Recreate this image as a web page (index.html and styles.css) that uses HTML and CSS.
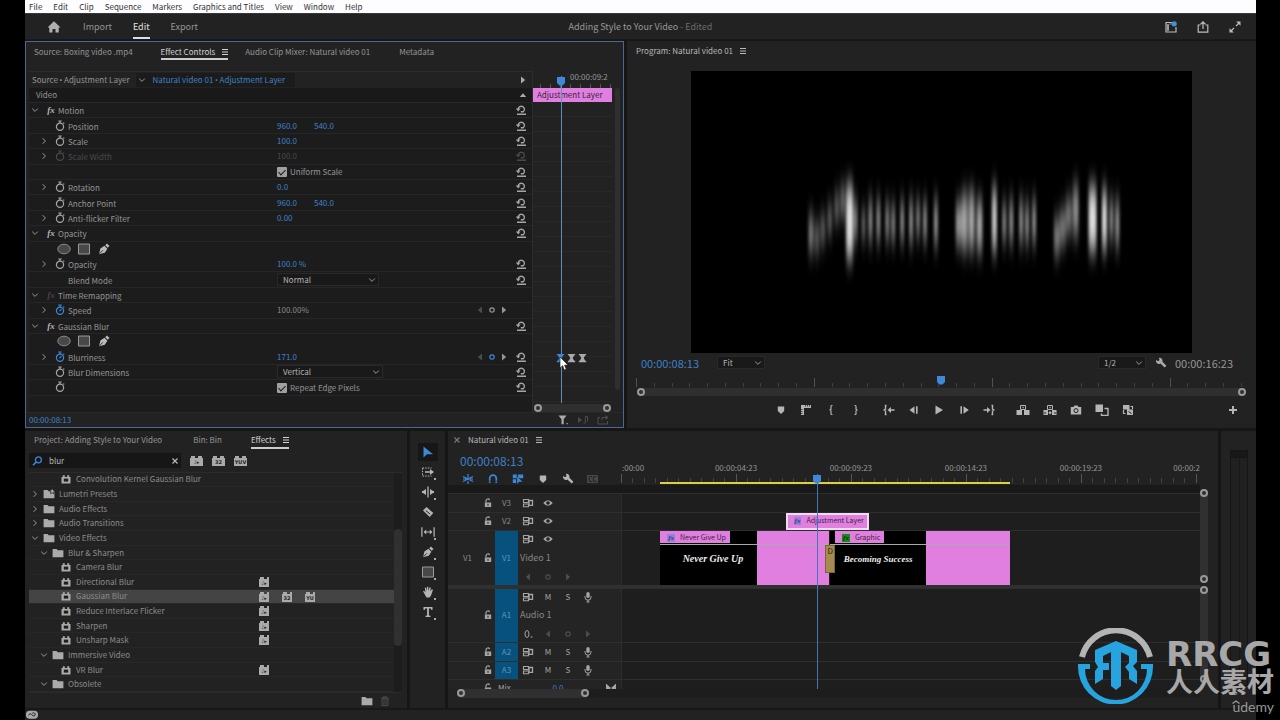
FILE: index.html
```html
<!DOCTYPE html>
<html lang="en">
<head>
<meta charset="utf-8">
<title>Adding Style to Your Video - Edited</title>
<link rel="stylesheet" href="styles.css">
</head>
<body>
<svg class="defs" aria-hidden="true">
  <symbol id="watch" viewBox="0 0 12 12"><path d="M4.3 1h3.4M6 1v2M9.3 2.6l.9.9" fill="none" stroke="currentColor" stroke-width="1.2"/><circle cx="6" cy="6.8" r="3.6" fill="none" stroke="currentColor" stroke-width="1.2"/></symbol>
  <symbol id="watch-on" viewBox="0 0 12 12"><path d="M4.3 1h3.4M6 1v2M9.3 2.6l.9.9M5.5 7.2l2-2" fill="none" stroke="currentColor" stroke-width="1.2"/><circle cx="6" cy="6.8" r="3.6" fill="none" stroke="currentColor" stroke-width="1.2"/></symbol>
  <symbol id="reset" viewBox="0 0 12 12"><path d="M3.2 5.2a3.1 3.1 0 1 1 5 2.600H5.8M2 10.300h9" fill="none" stroke="currentColor" stroke-width="1.400"/><path d="M.8 4.400h4.800L3.200 7.400z" fill="currentColor"/></symbol>
  <symbol id="chev-r" viewBox="0 0 12 12"><path d="M4.6 3.2L7.4 6 4.6 8.800" fill="none" stroke="currentColor"/></symbol>
  <symbol id="chev-d" viewBox="0 0 12 12"><path d="M3.200 4.600L6 7.400 8.800 4.600" fill="none" stroke="currentColor"/></symbol>
  <symbol id="tri-l" viewBox="0 0 12 12"><path d="M8 2.500v7L3.800 6z" fill="currentColor"/></symbol>
  <symbol id="tri-r" viewBox="0 0 12 12"><path d="M4 2.500v7L8.200 6z" fill="currentColor"/></symbol>
  <symbol id="tri-u" viewBox="0 0 12 12"><path d="M2.800 8h6.400L6 4.200z" fill="currentColor"/></symbol>
  <symbol id="key" viewBox="0 0 12 12"><circle cx="6" cy="6" r="2.200" fill="none" stroke="currentColor" stroke-width="1.200"/></symbol>
  <symbol id="ellipse" viewBox="0 0 14 12"><ellipse cx="7" cy="6" rx="6.200" ry="4.800" fill="#484848" stroke="#8a8a8a"/></symbol>
  <symbol id="rect" viewBox="0 0 14 12"><path d="M1.500 1h11v10h-11z" fill="#484848" stroke="#999"/></symbol>
  <symbol id="pen" viewBox="0 0 12 12"><path d="M1 11.200l1.400-5.800 4-2.600 3 3-2.600 4z" fill="currentColor"/><path d="M7.200 2.200L9 .500l2.500 2.500L9.800 4.800z" fill="currentColor"/><path d="M1.300 10.900l3.700-3.700" stroke="#1c1c1c" stroke-width=".8"/></symbol>
  <symbol id="home" viewBox="0 0 14 12"><path d="M7 .3L.5 6.400h1.800v5.200h3.200V8h3v3.600h3.200V6.400h1.800z" fill="currentColor"/></symbol>
  <symbol id="menu" viewBox="0 0 12 12"><path d="M3 3.500h6M3 6h6M3 8.500h6" stroke="currentColor"/></symbol>
  <symbol id="layout" viewBox="0 0 12 12"><path d="M7 1.500H1v9.500h10V6" fill="none" stroke="currentColor" stroke-width="1.200"/><path d="M2.500 3.500h1v6h-1zM4 3h3" fill="currentColor" stroke="currentColor" stroke-width=".6"/><circle cx="9.200" cy="2.800" r="2.600" fill="#4090dd"/></symbol>
  <symbol id="share" viewBox="0 0 12 12"><path d="M3.500 4H1.200v7.200h9.600V4H8.500M6 8V1M3.600 3.200L6 .900l2.400 2.300" fill="none" stroke="currentColor" stroke-width="1.200"/></symbol>
  <symbol id="expand" viewBox="0 0 12 12"><path d="M7 5l3.500-3.500M5 7l-3.500 3.500" stroke="currentColor" stroke-width="1.200"/><path d="M7.200.500h4.300v4.300zM.5 7.200v4.300h4.300z" fill="currentColor"/></symbol>
  <symbol id="wrench" viewBox="0 0 12 12"><path d="M3.800 1A2.900 2.900 0 0 1 7.400 4.700l4 4-1.700 1.900-4.300-4.200A2.900 2.900 0 0 1 1.100 3l2 1.300 1.500-1.200z" fill="currentColor"/></symbol>
  <symbol id="marker" viewBox="0 0 12 12"><path d="M2.800 2.500h6.400v4.400L6 9.900 2.800 6.900z" fill="currentColor"/></symbol>
  <symbol id="head" viewBox="0 0 10 12"><path d="M1 1h8v6L6.500 9.500h-3L1 7z" fill="#3f87d8"/></symbol>
  <symbol id="rulers" viewBox="0 0 12 12"><path d="M1 1h10v3H4v7H1z" fill="currentColor"/><path d="M5.500 1v1.500M7.500 1v1.500M9.500 1v1.500M1 5.500h1.500M1 7.500h1.500M1 9.500h1.500" stroke="#222" stroke-width=".8"/></symbol>
  <symbol id="in" viewBox="0 0 12 12"><path d="M7.500 1.500h-1Q6 1.500 6 2.500v2.700L5 6l1 .8v2.700q0 1 .5 1h1" fill="none" stroke="currentColor" stroke-width="1.200"/></symbol>
  <symbol id="out" viewBox="0 0 12 12"><path d="M4.500 1.500h1Q6 1.500 6 2.500v2.700L7 6l-1 .8v2.700q0 1-.5 1h-1" fill="none" stroke="currentColor" stroke-width="1.200"/></symbol>
  <symbol id="goin" viewBox="0 0 12 12"><path d="M3.500 1.500h-1v3.700L1.200 6l1.300.8v3.700h1M6 6h5.500" fill="none" stroke="currentColor" stroke-width="1.400"/><path d="M4.500 6L8 3v6z" fill="currentColor"/></symbol>
  <symbol id="goout" viewBox="0 0 12 12"><path d="M8.500 1.500h1v3.700l1.300.8-1.300.8v3.700h-1M.5 6H6" fill="none" stroke="currentColor" stroke-width="1.400"/><path d="M7.500 6L4 3v6z" fill="currentColor"/></symbol>
  <symbol id="back" viewBox="0 0 12 12"><path d="M6.500 2.300v7.400L1.500 6zM8 2.300h1.600v7.400H8z" fill="currentColor"/></symbol>
  <symbol id="fwd" viewBox="0 0 12 12"><path d="M5.500 2.300v7.400L10.800 6zM2.400 2.300H4v7.400H2.400z" fill="currentColor"/></symbol>
  <symbol id="play" viewBox="0 0 12 12"><path d="M2.500 1.500v9L10 6z" fill="currentColor"/></symbol>
  <symbol id="lift" viewBox="0 0 14 12"><path d="M4.500 1.500h5v4h-5z" fill="none" stroke="currentColor"/><path d="M6.500 2.800h1.200v1.500H6.500zM.5 6H6V11H.5zM8 6h5.500V11H8z" fill="currentColor"/></symbol>
  <symbol id="extract" viewBox="0 0 14 12"><path d="M4.500 1.500h5v4h-5z" fill="none" stroke="currentColor"/><path d="M6.500 2.800h1.200v1.500H6.500zM.5 6H5V11H.5zM9 6h4.500V11H9z" fill="currentColor"/><path d="M5.300 8.700L7 7v3.500zM8.700 8.700L7 7v3.500z" fill="currentColor"/><path d="M2 8v2M12 8v2" stroke="#222"/></symbol>
  <symbol id="camera" viewBox="0 0 12 12"><path d="M.8 3h2.700l1-1.500h3l1 1.500h2.700v7.500H.8z" fill="currentColor"/><circle cx="6" cy="6.600" r="2" fill="none" stroke="#222"/></symbol>
  <symbol id="compare" viewBox="0 0 14 12"><path d="M.5.500h7.500v7.500H.5z" fill="currentColor"/><path d="M9.500 4.500H13v7H6.500V9.500" fill="none" stroke="currentColor" stroke-width="1.400"/></symbol>
  <symbol id="proxy" viewBox="0 0 12 12"><path d="M1 1h6.500v4.500H1zM5 5.500h6V11H5z" fill="currentColor"/><path d="M8.500 2.500h2v2.500M3.500 9.500h-2V6" fill="none" stroke="currentColor" stroke-width="1.200"/><path d="M6.500 7.500l3 2" stroke="#222"/></symbol>
  <symbol id="plus" viewBox="0 0 12 12"><path d="M6 2v8M2 6h8" stroke="currentColor" stroke-width="2"/></symbol>
  <symbol id="search" viewBox="0 0 12 12"><circle cx="7.400" cy="4.800" r="3" fill="none" stroke="currentColor" stroke-width="1.300"/><path d="M5.200 7L2 10.200" stroke="currentColor" stroke-width="1.600"/></symbol>
  <symbol id="x" viewBox="0 0 12 12"><path d="M3.500 3.500l5 5M8.500 3.500l-5 5" stroke="currentColor" stroke-width="1.200"/></symbol>
  <symbol id="fxclip" viewBox="0 0 12 12"><path d="M1.500 4h1.300V2.200h2V4h2.400V2.200h2V4h1.300v6.500h-9z" fill="currentColor"/><path d="M3.800 5.600h4.400v3H3.800z" fill="#1e1e1e"/></symbol>
  <symbol id="folder" viewBox="0 0 12 12"><path d="M.6 2h4l1 1.300h5.800v6.900H.6z" fill="currentColor"/></symbol>
  <symbol id="preset" viewBox="0 0 12 12"><path d="M.6 2h4l1 1.300h5.800v6.900H.6z" fill="currentColor"/><path d="M9.300.5l.9 1.700 1.800.3-1.300 1.300.3 1.900-1.700-.9-1.700.9.300-1.900L6.300 2.500l1.800-.3z" fill="currentColor" stroke="#222" stroke-width=".7"/></symbol>
  <symbol id="trash" viewBox="0 0 12 12"><path d="M2 3h8M4.500 3V1.800h3V3M3 4h6v6.500H3zM5 5v4.500M7 5v4.500" fill="none" stroke="currentColor"/></symbol>
  <symbol id="arrow" viewBox="0 0 12 12"><path d="M1.500.5v11L5 8.300h6z" fill="currentColor"/></symbol>
  <symbol id="trackfwd" viewBox="0 0 14 12"><path d="M1.500 2h9M1.500 10h9M1.500 2v8" fill="none" stroke="currentColor" stroke-dasharray="1.500 1.200"/><path d="M4 6h6" stroke="currentColor" stroke-width="1.500"/><path d="M9 3l4 3-4 3z" fill="currentColor"/></symbol>
  <symbol id="ripple" viewBox="0 0 14 12"><path d="M7 .5v11M1 6h4M9 6h4" stroke="currentColor" stroke-width="1.300"/><path d="M.5 6L5 3v6zM13.500 6L9 3v6z" fill="currentColor"/></symbol>
  <symbol id="razor" viewBox="0 0 12 12"><path d="M1 4.500L4.500 1l6.800 6-3.600 4z" fill="currentColor"/><path d="M3.800 4.600l4.400 3.500" stroke="#222"/></symbol>
  <symbol id="slip" viewBox="0 0 16 12"><path d="M1 .5v11M15 .5v11M4 6h8" stroke="currentColor" stroke-width="1.400"/><path d="M3 6l3-2.800v5.600zM13 6l-3-2.800v5.600z" fill="currentColor"/></symbol>
  <symbol id="hand" viewBox="0 0 12 12"><path d="M1 5.200l1-.5 1.400 1.600L2.800 1.800l1.200-.3L5 5 5 .8h1.200L6.500 5 7.600 1.200l1.200.3L8.300 5.500 9.800 3.200l1.200.6L9 9.500 7.500 11.500H4.500z" fill="currentColor"/></symbol>
  <symbol id="type" viewBox="0 0 12 12"><path d="M1.500 1h9v3H9.300L9 2.400H6.900v7l1.600.4V11h-5V9.800l1.600-.4v-7H3L2.700 4H1.500z" fill="currentColor"/></symbol>
  <symbol id="lock" viewBox="0 0 12 12"><path d="M2.800 5.500h6.400V10H2.800z" fill="currentColor"/><path d="M4 5.500V3.800A1.900 1.900 0 0 1 7.600 3" fill="none" stroke="currentColor" stroke-width="1.200"/><path d="M6 6.800v2" stroke="#222"/></symbol>
  <symbol id="sync" viewBox="0 0 12 12"><path d="M1.500 2.500h5v3h-5zM1.500 7h5v2.800h-5z" fill="none" stroke="currentColor" stroke-width="1.100"/><path d="M7 3.500h3.500v4.800H7z" fill="none" stroke="currentColor" stroke-width="1.300"/></symbol>
  <symbol id="eye" viewBox="0 0 12 12"><path d="M1.200 6Q6 .3 10.800 6 6 11.700 1.200 6z" fill="currentColor"/><circle cx="6" cy="6" r="1.800" fill="#222"/></symbol>
  <symbol id="mic" viewBox="0 0 12 12"><rect x="4.300" y="1" width="3.400" height="6" rx="1.700" fill="currentColor"/><path d="M3 5v1.200a3 3 0 0 0 6 0V5M6 9v2M4.500 11h3" fill="none" stroke="currentColor"/></symbol>
  <symbol id="kf" viewBox="0 0 12 12"><ellipse cx="5" cy="6" rx="2" ry="3.500" fill="none" stroke="currentColor"/><path d="M8.800 9h1.500" stroke="currentColor" stroke-width="1.300"/></symbol>
  <symbol id="nest" viewBox="0 0 12 12"><path d="M1 3.500l10 5M1 8.500l10-5M6 1v4M1 6h4M6 8v3M8 6h3" stroke="currentColor" stroke-width="1.200"/></symbol>
  <symbol id="magnet" viewBox="0 0 12 12"><path d="M2.700 10V5.500a3.300 3.300 0 0 1 6.600 0V10" fill="none" stroke="currentColor" stroke-width="1.700"/><path d="M1.500 8.300h2.700M7.800 8.300h2.700" stroke="#222" stroke-width=".7"/></symbol>
  <symbol id="linked" viewBox="0 0 12 12"><path d="M.8 1.500H5v3.800H.8zM6 1.500h5.200v3.800H6zM.8 6.300H4v3.800H.8z" fill="currentColor"/><path d="M4.800 3v8.500L7.200 9H11z" fill="currentColor" stroke="#222" stroke-width=".5"/></symbol>
  <symbol id="funnel" viewBox="0 0 12 12"><path d="M1.500 1.500h8L6.700 5.200v5H4.500v-5zM9.500 9h1.300v1.300H9.500z" fill="currentColor"/></symbol>
  <symbol id="pnote" viewBox="0 0 12 12"><path d="M1 3v6l4-3z" fill="currentColor"/><path d="M6.500 9h1.800V2.500h2.200v5" fill="none" stroke="currentColor"/></symbol>
  <symbol id="exportclip" viewBox="0 0 12 12"><path d="M3 3.500H1v6.500h9.500V7M5 6.500V3.500h4" fill="none" stroke="currentColor"/><path d="M8.500 1l3 2.500-3 2.500z" fill="currentColor"/></symbol>
  <symbol id="hour" viewBox="0 0 12 12"><path d="M2 1.500h8v1.500H9L7.300 6 9 9h1v1.500H2V9h1l1.700-3L3 3H2z" fill="currentColor"/></symbol>
  <symbol id="ends" viewBox="0 0 12 12"><path d="M1.500 2v8M10.500 2v8" stroke="currentColor"/><path d="M2 2.500L6 6 2 9.500zM10 2.500L6 6l4 3.500z" fill="currentColor"/></symbol>
  <symbol id="cloud" viewBox="0 0 14 12"><path d="M4.500 1h5a4 4 0 0 1 0 9.500h-5a4.700 4.700 0 0 1 0-9.500z" fill="#aaa"/><path d="M3 6.500a2 2 0 0 1 3.500-1.200l2 2a2 2 0 1 0-1.200-3.200" fill="none" stroke="#222" stroke-width="1.200"/></symbol>
</svg>

<div class="app">
  <nav class="menubar" aria-label="Application">
    <button>File</button><button>Edit</button><button>Clip</button><button>Sequence</button><button>Markers</button><button>Graphics and Titles</button><button>View</button><button>Window</button><button>Help</button>
  </nav>

  <header class="header">
    <div class="modes">
      <button class="home" aria-label="Home"><svg><use href="#home"/></svg></button>
      <button>Import</button><button class="on">Edit</button><button>Export</button>
    </div>
    <h1 class="title">Adding Style to Your Video <span>- Edited</span></h1>
    <div class="header-tools">
      <button aria-label="Workspaces"><svg><use href="#layout"/></svg></button>
      <button aria-label="Quick export"><svg><use href="#share"/></svg></button>
      <button aria-label="Full screen"><svg><use href="#expand"/></svg></button>
    </div>
  </header>

  <main class="workspace">
    <div class="upper">
      <section class="panel ec">
        <div class="tabs ec-tabs">
          <button>Source: Boxing video .mp4</button>
          <button class="on">Effect Controls <svg><use href="#menu"/></svg></button>
          <button>Audio Clip Mixer: Natural video 01</button>
          <button>Metadata</button>
        </div>
        <div class="ec-body">
          <div class="ec-list">
            <div class="ec-source">
              <span class="src">Source <span class="dot">•</span> Adjustment Layer</span>
              <button class="seq"><svg><use href="#chev-d"/></svg><span>Natural video 01 <span class="dot">•</span> Adjustment Layer</span></button>
              <svg class="end"><use href="#tri-r"/></svg>
            </div>
            <div class="ec-video">Video<svg class="end"><use href="#tri-u"/></svg></div>
            <div class="props">
              <div class="prop group"><button class="tw" aria-label="Collapse"><svg><use href="#chev-d"/></svg></button><i class="fx">fx</i><span class="name">Motion</span><button class="reset" aria-label="Reset"><svg><use href="#reset"/></svg></button></div>
              <div class="prop"><span class="tw"></span><button class="sw" aria-label="Animate"><svg><use href="#watch"/></svg></button><span class="name">Position</span><span class="vals"><button>960.0</button><button>540.0</button></span><button class="reset" aria-label="Reset"><svg><use href="#reset"/></svg></button></div>
              <div class="prop"><button class="tw" aria-label="Expand"><svg><use href="#chev-r"/></svg></button><button class="sw" aria-label="Animate"><svg><use href="#watch"/></svg></button><span class="name">Scale</span><span class="vals"><button>100.0</button></span><button class="reset" aria-label="Reset"><svg><use href="#reset"/></svg></button></div>
              <div class="prop off"><button class="tw" aria-label="Expand"><svg><use href="#chev-r"/></svg></button><button class="sw" disabled aria-label="Animate"><svg><use href="#watch"/></svg></button><span class="name">Scale Width</span><span class="vals"><button disabled>100.0</button></span><button class="reset" disabled aria-label="Reset"><svg><use href="#reset"/></svg></button></div>
              <div class="prop"><span class="tw"></span><span class="sw"></span><span class="name"></span><label class="check"><input type="checkbox" checked>Uniform Scale</label><button class="reset" aria-label="Reset"><svg><use href="#reset"/></svg></button></div>
              <div class="prop"><button class="tw" aria-label="Expand"><svg><use href="#chev-r"/></svg></button><button class="sw" aria-label="Animate"><svg><use href="#watch"/></svg></button><span class="name">Rotation</span><span class="vals"><button>0.0</button></span><button class="reset" aria-label="Reset"><svg><use href="#reset"/></svg></button></div>
              <div class="prop"><span class="tw"></span><button class="sw" aria-label="Animate"><svg><use href="#watch"/></svg></button><span class="name">Anchor Point</span><span class="vals"><button>960.0</button><button>540.0</button></span><button class="reset" aria-label="Reset"><svg><use href="#reset"/></svg></button></div>
              <div class="prop"><button class="tw" aria-label="Expand"><svg><use href="#chev-r"/></svg></button><button class="sw" aria-label="Animate"><svg><use href="#watch"/></svg></button><span class="name">Anti-flicker Filter</span><span class="vals"><button>0.00</button></span><button class="reset" aria-label="Reset"><svg><use href="#reset"/></svg></button></div>
              <div class="prop group"><button class="tw" aria-label="Collapse"><svg><use href="#chev-d"/></svg></button><i class="fx">fx</i><span class="name">Opacity</span><button class="reset" aria-label="Reset"><svg><use href="#reset"/></svg></button></div>
              <div class="prop masks"><button aria-label="Ellipse mask"><svg><use href="#ellipse"/></svg></button><button aria-label="Rectangle mask"><svg><use href="#rect"/></svg></button><button aria-label="Pen mask"><svg><use href="#pen"/></svg></button></div>
              <div class="prop"><button class="tw" aria-label="Expand"><svg><use href="#chev-r"/></svg></button><button class="sw" aria-label="Animate"><svg><use href="#watch"/></svg></button><span class="name">Opacity</span><span class="vals"><button>100.0 %</button></span><button class="reset" aria-label="Reset"><svg><use href="#reset"/></svg></button></div>
              <div class="prop"><span class="tw"></span><span class="sw"></span><label class="name" for="blend">Blend Mode</label><span class="vals"><span class="select"><select id="blend"><option>Normal</option></select><svg><use href="#chev-d"/></svg></span></span><button class="reset" aria-label="Reset"><svg><use href="#reset"/></svg></button></div>
              <div class="prop group"><button class="tw" aria-label="Collapse"><svg><use href="#chev-d"/></svg></button><i class="fx dim">fx</i><span class="name">Time Remapping</span></div>
              <div class="prop"><button class="tw" aria-label="Expand"><svg><use href="#chev-r"/></svg></button><button class="sw live" aria-label="Animate"><svg><use href="#watch-on"/></svg></button><span class="name">Speed</span><span class="vals plain">100.00%</span><span class="keys"><svg class="faint"><use href="#tri-l"/></svg><svg><use href="#key"/></svg><svg><use href="#tri-r"/></svg></span><span class="reset"></span></div>
              <div class="prop group"><button class="tw" aria-label="Collapse"><svg><use href="#chev-d"/></svg></button><i class="fx">fx</i><span class="name">Gaussian Blur</span><button class="reset" aria-label="Reset"><svg><use href="#reset"/></svg></button></div>
              <div class="prop masks"><button aria-label="Ellipse mask"><svg><use href="#ellipse"/></svg></button><button aria-label="Rectangle mask"><svg><use href="#rect"/></svg></button><button aria-label="Pen mask"><svg><use href="#pen"/></svg></button></div>
              <div class="prop"><button class="tw" aria-label="Expand"><svg><use href="#chev-r"/></svg></button><button class="sw live" aria-label="Animate"><svg><use href="#watch-on"/></svg></button><span class="name">Blurriness</span><span class="vals"><button>171.0</button></span><span class="keys"><svg class="faint"><use href="#tri-l"/></svg><svg class="blue"><use href="#key"/></svg><svg><use href="#tri-r"/></svg></span><button class="reset" aria-label="Reset"><svg><use href="#reset"/></svg></button></div>
              <div class="prop"><span class="tw"></span><button class="sw" aria-label="Animate"><svg><use href="#watch"/></svg></button><label class="name" for="dims">Blur Dimensions</label><span class="vals"><span class="select wide"><select id="dims"><option>Vertical</option></select><svg><use href="#chev-d"/></svg></span></span><button class="reset" aria-label="Reset"><svg><use href="#reset"/></svg></button></div>
              <div class="prop"><span class="tw"></span><button class="sw" aria-label="Animate"><svg><use href="#watch"/></svg></button><span class="name"></span><label class="check"><input type="checkbox" checked>Repeat Edge Pixels</label><button class="reset" aria-label="Reset"><svg><use href="#reset"/></svg></button></div>
            </div>
          </div>
          <div class="ec-time">
            <div class="ec-ruler"><span>00:00:09:2</span></div>
            <div class="ec-clip">Adjustment Layer</div>
            <div class="ec-lanes"></div>
            <div class="zoombar"><b></b><b></b></div>
            <div class="ec-head"><svg><use href="#head"/></svg></div>
            <div class="ec-keys"><svg class="blue"><use href="#hour"/></svg><svg><use href="#hour"/></svg><svg><use href="#hour"/></svg></div>
            <svg class="cursor" viewBox="0 0 10 15"><path d="M1 1v11l2.600-2.300L5.300 14l2-.8-1.700-4L9 9z" fill="#fff" stroke="#222" stroke-width=".7"/></svg>
          </div>
          <div class="ec-scroll"><i></i></div>
        </div>
        <div class="ec-foot"><span class="tc">00:00:08:13</span><div><button aria-label="Filter"><svg><use href="#funnel"/></svg></button><button class="faint" aria-label="Play audio"><svg><use href="#pnote"/></svg></button><button class="faint" aria-label="Export"><svg><use href="#exportclip"/></svg></button></div></div>
      </section>

      <section class="panel program">
        <div class="tabs prog-tabs"><button class="lit">Program: Natural video 01 <svg><use href="#menu"/></svg></button></div>
        <div class="stage">
          <svg class="frame" viewBox="0 0 505 284" role="img" aria-label="Blurred title">
            <defs>
              <filter id="vb" x="-20%" y="-100%" width="140%" height="300%"><feGaussianBlur stdDeviation="1.500 13"/></filter>
            </defs>
            <rect width="505" height="284" fill="#000"/>
            <g filter="url(#vb)" fill="none" stroke="#ddd" stroke-linecap="round">
              <path d="M121 150v28M127 160v16M133 152v16M140 142v16M147 130v16M153 122v20" stroke-width="5" opacity=".65"/>
              <path d="M160 120v64" stroke-width="7"/>
              <path d="M166 136v30M174 146v18M181 134v34M189 134v34M198 138v28M204 140v28M213 136v32M222 134v36M229 136v26M236 136v32M247 134v38" stroke-width="4" opacity=".7"/>
              <path d="M270 138v32M276 128v48M283 126v50M291 134v44" stroke-width="6" opacity=".75"/>
              <path d="M306 122v56" stroke-width="5" opacity=".9"/>
              <path d="M316 138v30M323 134v36M333 134v36M339 138v32M346 134v36" stroke-width="4" opacity=".7"/>
              <path d="M369 154v26M375 146v24M381 134v24M388 120v42" stroke-width="6" opacity=".65"/>
              <path d="M405 122v54" stroke-width="8"/>
              <path d="M417 124v52" stroke-width="5"/>
              <path d="M424 134v32M430 134v40" stroke-width="4" opacity=".7"/>
            </g>
          </svg>
        </div>
        <div class="prog-info">
          <span class="tc big">00:00:08:13</span>
          <span class="select fit"><select aria-label="Zoom level"><option>Fit</option></select><svg><use href="#chev-d"/></svg></span>
          <span class="select res"><select aria-label="Playback resolution"><option>1/2</option></select><svg><use href="#chev-d"/></svg></span>
          <button aria-label="Settings"><svg><use href="#wrench"/></svg></button>
          <span class="dur">00:00:16:23</span>
        </div>
        <div class="prog-ruler"><svg class="ph"><use href="#head"/></svg></div>
        <div class="zoombar"><b></b><b></b></div>
        <div class="transport">
          <div class="keysgroup">
            <button aria-label="Add marker"><svg><use href="#marker"/></svg></button>
            <button aria-label="Show rulers"><svg><use href="#rulers"/></svg></button>
            <button aria-label="Mark in"><svg><use href="#in"/></svg></button>
            <button aria-label="Mark out"><svg><use href="#out"/></svg></button>
            <button class="sp" aria-label="Go to in"><svg><use href="#goin"/></svg></button>
            <button aria-label="Step back"><svg><use href="#back"/></svg></button>
            <button aria-label="Play"><svg><use href="#play"/></svg></button>
            <button aria-label="Step forward"><svg><use href="#fwd"/></svg></button>
            <button aria-label="Go to out"><svg><use href="#goout"/></svg></button>
            <button class="sp" aria-label="Lift"><svg class="w"><use href="#lift"/></svg></button>
            <button aria-label="Extract"><svg class="w"><use href="#extract"/></svg></button>
            <button aria-label="Export frame"><svg><use href="#camera"/></svg></button>
            <button aria-label="Comparison view"><svg class="w"><use href="#compare"/></svg></button>
            <button aria-label="Toggle proxies"><svg><use href="#proxy"/></svg></button>
          </div>
          <button aria-label="Button editor"><svg><use href="#plus"/></svg></button>
        </div>
      </section>
    </div>

    <div class="lower">
      <section class="panel effects">
        <div class="tabs fx-tabs">
          <button>Project: Adding Style to Your Video</button>
          <button>Bin: Bin</button>
          <button class="on">Effects <svg><use href="#menu"/></svg></button>
        </div>
        <div class="searchrow">
          <label class="search"><svg class="blue"><use href="#search"/></svg><input type="text" value="blur" aria-label="Search effects"><button aria-label="Clear"><svg><use href="#x"/></svg></button></label>
          <button class="brick" aria-label="Accelerated">♪▸</button><button class="brick" aria-label="32-bit">32</button><button class="brick" aria-label="YUV">YUV</button>
        </div>
        <div class="treewrap">
          <ul class="tree">
            <li class="l3"><svg><use href="#fxclip"/></svg>Convolution Kernel Gaussian Blur</li>
            <li class="l1"><svg class="t"><use href="#chev-r"/></svg><svg><use href="#preset"/></svg>Lumetri Presets</li>
            <li class="l1"><svg class="t"><use href="#chev-r"/></svg><svg><use href="#folder"/></svg>Audio Effects</li>
            <li class="l1"><svg class="t"><use href="#chev-r"/></svg><svg><use href="#folder"/></svg>Audio Transitions</li>
            <li class="l1"><svg class="t"><use href="#chev-d"/></svg><svg><use href="#folder"/></svg>Video Effects</li>
            <li class="l2"><svg class="t"><use href="#chev-d"/></svg><svg><use href="#folder"/></svg>Blur &amp; Sharpen</li>
            <li class="l3"><svg><use href="#fxclip"/></svg>Camera Blur</li>
            <li class="l3"><svg><use href="#fxclip"/></svg>Directional Blur<span class="badges"><b>♪▸</b></span></li>
            <li class="l3 sel"><svg><use href="#fxclip"/></svg>Gaussian Blur<span class="badges"><b>♪▸</b><b>32</b><b>YU</b></span></li>
            <li class="l3"><svg><use href="#fxclip"/></svg>Reduce Interlace Flicker<span class="badges"><b>♪▸</b></span></li>
            <li class="l3"><svg><use href="#fxclip"/></svg>Sharpen<span class="badges"><b>♪▸</b></span></li>
            <li class="l3"><svg><use href="#fxclip"/></svg>Unsharp Mask<span class="badges"><b>♪▸</b></span></li>
            <li class="l2"><svg class="t"><use href="#chev-d"/></svg><svg><use href="#folder"/></svg>Immersive Video</li>
            <li class="l3"><svg><use href="#fxclip"/></svg>VR Blur<span class="badges"><b>♪▸</b></span></li>
            <li class="l2"><svg class="t"><use href="#chev-d"/></svg><svg><use href="#folder"/></svg>Obsolete</li>
          </ul>
          <div class="treescroll"><i></i></div>
        </div>
        <div class="fx-foot"><button aria-label="New bin"><svg><use href="#folder"/></svg></button><button class="faint" aria-label="Delete"><svg><use href="#trash"/></svg></button></div>
      </section>

      <section class="panel tools" aria-label="Tools">
        <button class="on" aria-label="Selection"><svg><use href="#arrow"/></svg></button>
        <button class="more" aria-label="Track select"><svg><use href="#trackfwd"/></svg></button>
        <button class="more" aria-label="Ripple edit"><svg><use href="#ripple"/></svg></button>
        <button aria-label="Razor"><svg><use href="#razor"/></svg></button>
        <button class="more" aria-label="Slip"><svg><use href="#slip"/></svg></button>
        <button class="more" aria-label="Pen"><svg><use href="#pen"/></svg></button>
        <button class="more" aria-label="Rectangle"><svg><use href="#rect"/></svg></button>
        <button class="more" aria-label="Hand"><svg><use href="#hand"/></svg></button>
        <button class="more" aria-label="Type"><svg><use href="#type"/></svg></button>
      </section>

      <section class="panel timeline">
        <div class="tabs tl-tabs"><button class="lit"><svg class="close"><use href="#x"/></svg>Natural video 01 <svg><use href="#menu"/></svg></button></div>
        <div class="tl-body">
          <div class="tl-top">
            <div class="tl-ctl">
              <span class="tc large">00:00:08:13</span>
              <div class="tl-icons">
                <button class="blue" aria-label="Nest"><svg><use href="#nest"/></svg></button>
                <button class="blue" aria-label="Snap"><svg><use href="#magnet"/></svg></button>
                <button class="blue" aria-label="Linked selection"><svg><use href="#linked"/></svg></button>
                <button aria-label="Add marker"><svg><use href="#marker"/></svg></button>
                <button aria-label="Settings"><svg><use href="#wrench"/></svg></button>
                <button class="cc" aria-label="Captions">CC</button>
              </div>
            </div>
            <div class="tl-ruler">
              <span class="r0">:00:00</span><span class="r1">00:00:04:23</span><span class="r2">00:00:09:23</span><span class="r3">00:00:14:23</span><span class="r4">00:00:19:23</span><span class="r5">00:00:2</span>
              <div class="ticks"></div><div class="workbar"></div>
            </div>
          </div>
          <div class="tl-main">
            <div class="tracks">
              <div class="strip"></div>
              <div class="track v3"><div class="th"><span></span><svg><use href="#lock"/></svg><span class="tg">V3</span><svg><use href="#sync"/></svg><svg><use href="#eye"/></svg></div><div class="lane"></div></div>
              <div class="track v2"><div class="th"><span></span><svg><use href="#lock"/></svg><span class="tg">V2</span><svg><use href="#sync"/></svg><svg><use href="#eye"/></svg></div><div class="lane"><div class="clip adj"><em>fx</em>Adjustment Layer</div></div></div>
              <div class="track v1"><div class="th tall"><span>V1</span><svg><use href="#lock"/></svg><span class="tg on">V1</span>
                <div class="sub"><div><svg><use href="#sync"/></svg><svg><use href="#eye"/></svg></div><p>Video 1</p><div class="faint"><svg><use href="#tri-l"/></svg><svg><use href="#key"/></svg><svg><use href="#tri-r"/></svg></div></div></div>
                <div class="lane">
                  <div class="clip c1"><div class="thumb"><span>Never Give Up</span></div><div class="tag"><em>fx</em>Never Give Up</div></div>
                  <div class="clip c2"><div class="thumb"><span>Becoming Success</span></div><div class="tag"><em class="green">fx</em>Graphic</div></div>
                  <div class="trans">D</div>
                </div></div>
              <div class="divider"></div>
              <div class="track a1"><div class="th tall"><span></span><svg><use href="#lock"/></svg><span class="tg on">A1</span>
                <div class="sub"><div><svg><use href="#sync"/></svg><button>M</button><button>S</button><svg><use href="#mic"/></svg></div><p>Audio 1</p><div><svg><use href="#kf"/></svg><svg class="faint"><use href="#tri-l"/></svg><svg class="faint"><use href="#key"/></svg><svg class="faint"><use href="#tri-r"/></svg></div></div></div><div class="lane"></div></div>
              <div class="track a2"><div class="th"><span></span><svg><use href="#lock"/></svg><span class="tg on">A2</span><svg><use href="#sync"/></svg><button>M</button><button>S</button><svg><use href="#mic"/></svg></div><div class="lane"></div></div>
              <div class="track a3"><div class="th"><span></span><svg><use href="#lock"/></svg><span class="tg on">A3</span><svg><use href="#sync"/></svg><button>M</button><button>S</button><svg><use href="#mic"/></svg></div><div class="lane"></div></div>
              <div class="track mix"><div class="th"><span></span><svg><use href="#lock"/></svg><span class="mixname">Mix</span><span class="mixval">0.0</span><svg><use href="#ends"/></svg></div><div class="lane"></div></div>
            </div>
            <div class="vbars"><div><b></b><b></b></div><div><b></b><b></b></div></div>
          </div>
          <div class="over"><div class="playhead"><svg><use href="#head"/></svg></div></div>
        </div>
        <div class="hbar"><div><b></b><b></b></div></div>
      </section>

      <section class="panel meters" aria-label="Audio meters"><div class="meter"><i></i><i></i></div><div class="solo"><span>S</span><span>S</span></div></section>
    </div>
  </main>
  <footer class="status"><svg><use href="#cloud"/></svg></footer>
</div>

<div class="mark">
  <svg class="logo" viewBox="0 0 76 76">
    <path d="M4 29A35 35 0 0 1 72 29" fill="none" stroke="#b4b4b4" stroke-width="6"/>
    <path d="M0 36h12v5H7a31 31 0 0 0 62 0h-6v-5h12v3A37.500 37.500 0 0 1 0 39z" fill="#27a3df"/>
    <path d="M38 13l21 9v12l-4 4 4 5v13l-8-5V44l-4-5 4-4v-7l-8-4v34l-5 4-5-4V24l-8 4v7h6v7h-6v9l-8 5V43l3-4-3-5V22z" fill="#27a3df"/>
  </svg>
  <div class="words"><strong>RRCG</strong><span lang="zh">人人素材</span></div>
  <div class="udemy"><svg viewBox="0 0 8 4"><path d="M.5 3.500L4 1l3.500 2.500" fill="none" stroke="#999" stroke-width="1.300"/></svg>udemy</div>
</div>
</body>
</html>
```
FILE: styles.css
```css
* { box-sizing: border-box; }
body { margin: 0; background: #000; color: #959595; font: 8px/12px "Noto Sans CJK SC", "Noto Sans", sans-serif; position: relative; overflow: hidden; }
button, input, select { font: inherit; color: inherit; background: none; border: 0; padding: 0; margin: 0; outline: 0; }
button { display: inline-flex; align-items: center; justify-content: center; white-space: nowrap; }
svg { width: 12px; height: 12px; flex: none; display: block; }
.defs { display: none; }
.blue { color: #3f87d8; }
.faint { color: #4c4c4c; }
.tc { color: #3f80c8; }

.app { display: flex; flex-direction: column; height: 100vh; margin: 0 24px 0 25px; background: #161616; }
.menubar { display: flex; gap: 11px; height: 13px; padding: 0 4px; background: #fdfcff; color: #333; flex: none; }
.header { display: grid; grid-template-columns: 1fr auto 1fr; align-items: center; height: 27px; background: #222; border-top: 1px solid #383838; border-bottom: 1px solid #191919; font-size: 9px; flex: none; }
.modes { display: flex; gap: 28px; height: 100%; padding-left: 22px; }
.modes .home { color: #b0b0b0; margin-right: -6px; }
.modes .home svg { width: 14px; }
.modes button { border-bottom: 2px solid transparent; border-top: 2px solid transparent; }
.modes .on { color: #e4e4e4; border-bottom-color: #ddd; margin-left: -7px; }
.modes .on + button { margin-left: -7px; }
.title { margin: 0; font: inherit; color: #999; }
.title span { color: #6c6c6c; }
.header-tools { display: flex; justify-content: flex-end; gap: 20px; padding-right: 15px; color: #bbb; }

.workspace { flex: 1; display: grid; grid-template-rows: minmax(0, 386fr) minmax(0, 277fr); gap: 3px; min-height: 0; padding-top: 1px; }
.upper { display: grid; grid-template-columns: 599fr 629fr; gap: 3px; min-height: 0; }
.lower { display: grid; grid-template-columns: 382px 35px minmax(0, 1fr) 35px; gap: 3px; min-height: 0; }
.panel { background: #222; min-width: 0; min-height: 0; display: flex; flex-direction: column; }
.tabs { display: flex; align-items: flex-start; flex: none; }
.tabs button { height: 18px; padding-top: 3px; border-bottom: 2px solid transparent; }
.tabs .on { color: #d2d2d2; border-bottom-color: #ccc; }
.tabs .lit { color: #b8b8b8; }
.tabs button svg { margin-left: 4px; }
.tabs .on svg { margin-right: -3px; }

/* Effect controls */
.ec { border: 1px solid #4a6796; }
.ec-tabs { gap: 17px; padding-left: 8px; height: 29px; }
.ec-tabs .on { margin-left: 11px; }
.ec-tabs button:last-child { margin-left: 12px; }
.ec-body { flex: 1; display: grid; grid-template-columns: minmax(0, 1fr) 80px 11px; padding-left: 3px; min-height: 0; }
.ec-list { background: #1c1c1c; display: flex; flex-direction: column; padding-bottom: 16px; min-height: 0; }
.ec-source { display: flex; height: 17px; align-items: center; background: #222; border-top: 1px solid #2c2c2c; flex: none; white-space: nowrap; }
.ec-source .src { padding: 0 6px 0 3px; }
.ec-source .seq { background: #1b1b1b; color: #3f80c8; height: 14px; padding-right: 10px; }
.ec-source .seq svg { margin-right: 5px; color: #999; }
.dot { font-family: "Noto Sans", sans-serif; font-size: 7px; }
.end { margin-left: auto; margin-right: 3px; color: #aaa; }
.ec-video { display: flex; align-items: center; height: 15px; padding-left: 7px; background: #191919; border-bottom: 1px solid #282828; flex: none; }
.props { flex: 1; display: grid; grid-auto-rows: minmax(0, 1fr); min-height: 0; }
.prop { display: grid; grid-template-columns: 25px 14px 209px minmax(0, 1fr) 32px 22px; align-items: center; border-bottom: 1px solid #262626; }
.tw { justify-content: flex-end; padding-right: 4px; color: #999; }
.sw, .reset { color: #a5a5a5; justify-content: flex-start; }
.prop .live { color: #3f87d8; }
.name { padding-top: 2px; }
.vals, .check { grid-column: 4; display: flex; align-items: center; gap: 17px; color: #3f80c8; white-space: nowrap; }
.vals.plain { color: #8a8a8a; }
.keys { grid-column: 5; display: flex; justify-self: end; }
.reset { grid-column: 6; justify-self: start; margin-left: 5px; }
.group { grid-template-columns: 13px 16px minmax(0, 1fr) 0 0 22px; }
.group .tw { padding-right: 1px; }
.fx { font: italic bold 9px/12px "Liberation Serif", serif; color: #b5b5b5; text-align: center; padding-left: 2px; }
.fx.dim { color: #444; }
.off, .off .sw, .off .vals, .off .reset { color: #4a4a4a; }
.masks { display: flex; gap: 6px; padding-left: 28px; color: #bbb; border-bottom-color: transparent; }
.masks svg { width: 14px; }
.check { gap: 3px; color: #959595; padding-top: 1px; }
.check input { appearance: none; width: 10px; height: 10px; background: #a0a0a0; border-radius: 1px; display: grid; place-items: center; }
.check input::after { content: ""; width: 3px; height: 6px; border: solid #1c1c1c; border-width: 0 1px 1px 0; rotate: 45deg; margin-bottom: 1px; }
.select { display: grid; align-items: center; width: 102px; color: #b5b5b5; }
.select select { grid-area: 1 / 1; appearance: none; height: 13px; width: 100%; padding-left: 5px; background: #191919; border: 1px solid #292929; }
.select svg { grid-area: 1 / 1; justify-self: end; margin-right: 1px; pointer-events: none; color: #999; }
.select.wide { width: 106px; }
.ec-time { position: relative; display: flex; flex-direction: column; background: #222; border-left: 1px solid #2c2c2c; overflow: hidden; min-height: 0; }
.ec-ruler { height: 17px; flex: none; padding-left: 37px; background: repeating-linear-gradient(90deg, #555 0 1px, transparent 1px 10px) 7px 100% / 100% 4px no-repeat; }
.ec-clip { height: 14px; flex: none; padding-left: 4px; line-height: 14px; background: #e17fe0; color: #3a1f3a; white-space: nowrap; }
.ec-lanes { flex: 1; background: repeating-linear-gradient(transparent 0 14px, #282828 14px 15px); }
.zoombar { display: flex; justify-content: space-between; align-items: center; height: 8px; flex: none; background: #2f2f2f; border-radius: 4px; }
.zoombar b, .vbars b, .hbar b { width: 8px; height: 8px; border: 2px solid #999; border-radius: 50%; flex: none; }
.ec-time .zoombar { margin: 0 1px; }
.ec-head { position: absolute; left: 23px; top: 5px; bottom: 9px; width: 10px; background: linear-gradient(#5f8fc0, #5f8fc0) 5px 0 / 1px 100% no-repeat; }
.ec-head svg { width: 10px; }
.ec-keys { position: absolute; left: 22px; bottom: 48px; display: flex; color: #aaa; }
.ec-keys svg { width: 11px; }
.cursor { position: absolute; left: 26px; bottom: 41px; width: 10px; height: 15px; }
.ec-scroll { padding: 17px 3px 22px; }
.ec-scroll i { display: block; height: 100%; background: #2f2f2f; border-radius: 3px; }
.ec-foot { display: flex; justify-content: space-between; align-items: center; height: 15px; flex: none; padding: 0 14px 0 3px; border-top: 1px solid #292929; }
.ec-foot div { display: flex; gap: 8px; color: #aaa; }

/* Program monitor */
.prog-tabs { padding-left: 9px; height: 30px; }
.program { padding-bottom: 4px; }
.stage { flex: 1; min-height: 0; display: flex; justify-content: center; }
.frame { height: 100%; width: auto; aspect-ratio: 505 / 284; background: #000; }
.prog-info { display: flex; align-items: center; height: 20px; flex: none; padding: 0 23px 0 14px; }
.big, .dur { font-size: 11px; }
.fit { width: 48px; margin-left: 18px; }
.res { width: 48px; margin: 0 9px 0 auto; }
.prog-info button { color: #aaa; margin-right: 8px; }
.prog-ruler { position: relative; height: 14px; flex: none; margin: 0 13px 0 9px; background: repeating-linear-gradient(90deg, #505050 0 1px, transparent 1px 29.300%) 0 100% / 100% 9px no-repeat, repeating-linear-gradient(90deg, #404040 0 1px, transparent 1px 2.930%) 0 100% / 100% 4px no-repeat; }
.ph { position: absolute; left: 49.400%; top: 2px; width: 10px; }
.program > .zoombar { margin: 1px 10px 0; }
.transport { display: grid; grid-template-columns: 1fr auto 19px; align-items: center; height: 28px; flex: none; padding-right: 14px; color: #b5b5b5; }
.keysgroup { grid-column: 1; display: flex; justify-content: center; gap: 13px; padding-left: 59px; }
.keysgroup .sp { margin-left: 8px; }
.keysgroup .w { width: 14px; }
.transport > button { grid-column: 3; }

/* Effects browser */
.fx-tabs { padding-left: 9px; height: 22px; gap: 31px; }
.fx-tabs .on { margin-left: -2px; }
.searchrow { display: flex; align-items: center; gap: 9px; padding: 0 4px; height: 16px; flex: none; }
.search { display: flex; align-items: center; width: 152px; height: 15px; background: #161616; padding: 0 0 0 2px; color: #b8b8b8; }
.search input { flex: 1; min-width: 0; padding-left: 6px; }
.brick, .badges b { display: block; width: 13px; height: 10px; padding-top: 2px; background: linear-gradient(#aaa, #aaa) 0 100% / 100% 8px no-repeat, linear-gradient(90deg, transparent 0 1px, #aaa 1px 5px, transparent 5px 8px, #aaa 8px 12px, transparent 12px); color: #222; font: bold 5px/8px "DejaVu Sans", sans-serif; text-align: center; }
.badges b { width: 10px; background-size: 100% 8px, 100% 100%; }
.treewrap { flex: 1; min-height: 0; display: grid; grid-template-columns: minmax(0, 1fr) 8px; grid-template-rows: minmax(0, 1fr); margin: 3px 5px 0 4px; border-top: 1px solid #2b2b2b; border-bottom: 1px solid #2b2b2b; }
.tree { margin: 0; padding: 0; list-style: none; display: grid; grid-auto-rows: minmax(0, 1fr); min-height: 0; }
.tree li { display: flex; align-items: center; gap: 4px; border-bottom: 1px solid #272727; color: #8c8c8c; position: relative; }
.tree svg { color: #aaa; }
.tree .t { color: #999; margin-right: -2px; }
.tree .l2 { padding-left: 9px; }
.tree .l3 { padding-left: 31px; }
.tree .sel { background: #444; }
.badges { position: absolute; left: 230px; top: 2px; display: flex; gap: 13px; }
.treescroll { background: #1d1d1d; padding: 56px 0 46px; }
.treescroll i { display: block; height: 100%; background: #303030; border-radius: 4px; }
.fx-foot { display: flex; justify-content: flex-end; gap: 6px; height: 15px; flex: none; padding-right: 16px; color: #aaa; }

/* Tool strip */
.tools { padding: 12px 7px 0 8px; gap: 2px; color: #b5b5b5; }
.tools button { position: relative; height: 18px; }
.tools button svg { width: 14px; height: 12px; }
.tools .on { background: #171717; color: #3f87d8; }
.tools .more::after { content: ""; position: absolute; right: 2px; bottom: 1px; border: 1px solid #aaa; }

/* Timeline */
.tl-tabs { height: 20px; padding-left: 3px; }
.tl-tabs .close { margin: 0 5px 0 0; color: #777; }
.tl-body { position: relative; }
.tl-top { display: grid; grid-template-columns: 173px minmax(0, 1fr) 18px; height: 34px; }
.tl-ctl { padding: 4px 0 0 12px; }
.large { font-size: 12px; }
.tl-icons { display: flex; gap: 13px; margin: 4px 0 0 2px; color: #b5b5b5; }
.cc { font-size: 7px; font-weight: bold; color: #222; background: #484848; height: 8px; padding: 0 1px; margin: 2px 0 0; border-radius: 1px; }
.tl-ruler { position: relative; overflow: hidden; }
.tl-ruler span { position: absolute; top: 11px; translate: -50% 0; }
.tl-ruler .r0 { left: 1px; translate: 0 0; }
.tl-ruler .r1 { left: 19.860%; }
.tl-ruler .r2 { left: 39.720%; }
.tl-ruler .r3 { left: 59.580%; }
.tl-ruler .r4 { left: 79.440%; }
.tl-ruler .r5 { left: auto; right: 0; translate: 0 0; }
.ticks { position: absolute; inset: auto 0 2px; height: 9px; background: repeating-linear-gradient(90deg, #555 0 1px, transparent 1px 19.860%), repeating-linear-gradient(90deg, #444 0 1px, transparent 1px 1.986%) 0 100% / 100% 5px no-repeat; }
.workbar { position: absolute; left: 6.700%; width: 60.500%; bottom: 1px; height: 2px; background: #dcd04a; }
.tl-main { display: grid; grid-template-columns: minmax(0, 1fr) 18px; }
.strip { height: 8px; background: #191919; }
.track { display: grid; grid-template-columns: 173px minmax(0, 1fr); border-top: 1px solid #2e2e2e; overflow: hidden; }
.v3, .a2 { height: 19px; }
.v2, .a3 { height: 18px; }
.v1 { height: 55px; }
.a1 { height: 54px; }
.mix { height: 10px; }
.divider { height: 3px; background: #303030; }
.th { display: grid; grid-template-columns: 33px 14px 23px 20px 20px 20px 20px; align-items: center; justify-items: center; background: #242424; color: #a5a5a5; }
.th > span:first-child { padding-left: 6px; color: #888; }
.tg { align-self: stretch; justify-self: stretch; display: grid; place-items: center; color: #888; }
.tg.on { background: #07517f; color: #5f97b8; }
.sub { grid-column: 4 / -1; justify-self: stretch; align-self: stretch; display: flex; flex-direction: column; justify-content: space-between; padding: 2px 0; }
.sub div { display: grid; grid-template-columns: 20px 20px 20px 20px; justify-items: center; }
.sub p { margin: 0 0 0 2px; font-size: 9px; color: #888; }
.mixname { justify-self: start; padding-left: 3px; }
.mixval { grid-column: 5 / 7; color: #3f80c8; }
.mix svg:last-child { grid-column: 7; margin-left: 46px; }
.mix .th { height: 16px; }
.lane { position: relative; background: #1e1e1e; border-left: 1px solid #2c2c2c; }
.clip { position: absolute; top: 0; bottom: 0; background: #e17fe0; white-space: nowrap; color: #3a1f3a; }
.clip em, .tag em { font: italic bold 7px/7px "Liberation Serif", serif; background: #9a7fd8; color: #2c3a80; padding: 0 1px; margin-right: 5px; }
.tag em.green { background: #178a1e; color: #04300a; }
.adj { left: 28.300%; width: 14.500%; border: 2px solid #eedcf0; padding-left: 6px; font-size: 7px; line-height: 10px; }
.c1 { left: 6.600%; width: 29.300%; }
.c2 { left: 36%; width: 31.100%; }
.thumb { position: absolute; inset: 0 auto 0 0; width: 57%; padding-top: 22px; background: #000; color: #eee; text-align: center; font: italic bold 10px/12px "Liberation Serif", serif; }
.c1 .thumb { padding-left: 9px; }
.c2 .thumb { width: 53.500%; font-size: 9px; }
.clip::after { content: ""; position: absolute; left: 0; right: 0; top: 13px; height: 1px; background: #aaa; }
.adj::after { display: none; }
.tag { position: absolute; left: 0; top: 0; height: 12px; padding: 0 4px 0 7px; background: #e17fe0; line-height: 12px; z-index: 1; font-size: 7px; }
.c2 .tag { left: 5px; }
.trans { position: absolute; left: 35.200%; top: 14px; width: 10px; height: 28px; background: #a58b4e; color: #2c2410; border: 1px solid #7a6638; line-height: 10px; padding-left: 1px; }
.vbars { display: grid; grid-template-rows: 94px 97px; gap: 3px; padding: 4px 10px 0 0; }
.vbars div { display: flex; flex-direction: column; justify-content: space-between; background: #303030; border-radius: 4px; }
.over { position: absolute; inset: 23px 18px 0 173px; pointer-events: none; }
.playhead { position: absolute; left: 33.900%; top: 0; bottom: 0; width: 10px; margin-left: -5px; background: linear-gradient(#3f78b8, #3f78b8) 5px 0 / 1px 100% no-repeat; }
.playhead svg { width: 10px; }
.hbar { height: 9px; flex: none; margin: 0 18px 0 9px; background: #1d1d1d; border-radius: 4px; }
.hbar div { display: flex; justify-content: space-between; align-items: center; width: 132px; height: 9px; background: #303030; border-radius: 4px; }
.meters { padding: 19px 8px 0 9px; }
.meter { flex: 1; display: grid; grid-template-columns: 1fr 1fr; gap: 1px; background: #181818; border: 1px solid #151515; padding-top: 6px; }
.meter i { background: #202020; border-top: 1px solid #151515; }
.solo { display: flex; justify-content: center; gap: 3px; height: 22px; color: #aaa; }
.status { height: 12px; flex: none; background: #222; border-top: 2px solid #181818; display: flex; align-items: center; }
.status svg { width: 14px; height: 10px; }

/* Watermark */
.mark { position: absolute; right: 6px; bottom: 6px; display: grid; grid-template-columns: 76px auto; column-gap: 12px; color: #a8a8a8; }
.logo { width: 76px; height: 76px; }
.words { display: flex; flex-direction: column; padding-top: 13px; }
.words strong { font: bold 34px/26px "DejaVu Sans", sans-serif; }
.words span { font: bold 27px/27px "Noto Sans CJK SC", sans-serif; }
.udemy { grid-column: 2; justify-self: end; position: relative; margin-top: -4px; font: 14px/14px Lato, sans-serif; color: #999; }
.udemy svg { position: absolute; left: 0; top: 0; width: 8px; height: 4px; }
```
